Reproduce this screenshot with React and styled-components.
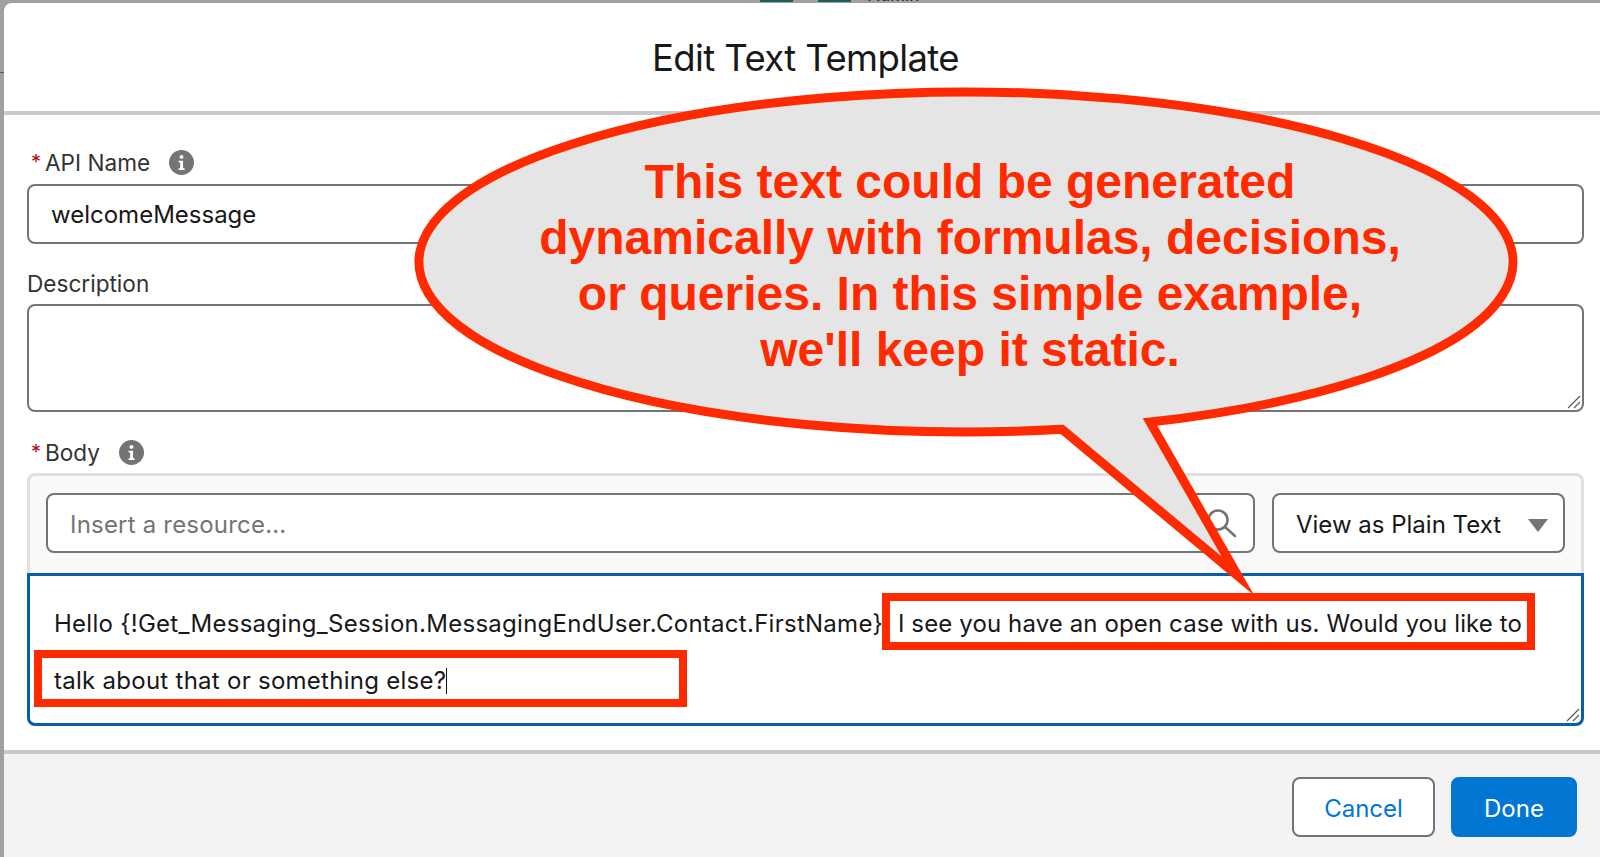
import React from 'react';
import styled, { createGlobalStyle } from 'styled-components';

const Global = createGlobalStyle`
  html, body { margin: 0; padding: 0; height: 100%; background: #a0a0a0; overflow: hidden; }
  * { box-sizing: border-box; }
`;

function InfoIcon() {
  return (
    <InfoSvg viewBox="0 0 24 24">
      <circle cx="12" cy="12" r="12" fill="#747474" />
      <circle cx="12" cy="6.6" r="1.9" fill="#fff" />
      <path d="M9.2 10.4h4.3v7.2h1.5v1.6H9.2v-1.6h1.5v-5.6H9.2z" fill="#fff" />
    </InfoSvg>
  );
}

function Grip() {
  return (
    <GripSvg viewBox="0 0 14 14">
      <path d="M1 13 13 1M7 13l6-6" stroke="#555" strokeWidth="1.1" fill="none" />
    </GripSvg>
  );
}

export default function App() {
  return (
    <Page>
      <Global />
      <BehindBar>
        <TealChip />
        <TealChip />
        <BehindText>Admin</BehindText>
      </BehindBar>
      <BehindLine />
      <Modal>
        <Header>Edit Text Template</Header>
        <Content>
          <Label>
            <Star>*</Star>API Name
            <InfoIcon />
          </Label>
          <Input>welcomeMessage</Input>
          <DescLabel>Description</DescLabel>
          <TextArea>
            <Grip />
          </TextArea>
          <BodyLabel>
            <Star>*</Star>Body
            <InfoIcon />
          </BodyLabel>
          <BodyPanel>
            <Toolbar>
              <ResourceBox>
                Insert a resource...
                <SearchSvg viewBox="0 0 32 32">
                  <circle cx="13" cy="13" r="9.5" />
                  <path d="M20 20l10 9" />
                </SearchSvg>
              </ResourceBox>
              <ViewSelect>
                View as Plain Text
                <Caret />
              </ViewSelect>
            </Toolbar>
            <Editor>
              <EditorLine>
                <span>Hello {'{'}!Get_Messaging_Session.MessagingEndUser.Contact.FirstName{'}'}</span>
                <Marked>I see you have an open case with us. Would you like to</Marked>
              </EditorLine>
              <EditorLine>
                <MarkedSecond>
                  talk about that or something else?<Cursor />
                </MarkedSecond>
              </EditorLine>
              <Grip />
            </Editor>
          </BodyPanel>
        </Content>
        <Footer>
          <CancelButton>Cancel</CancelButton>
          <DoneButton>Done</DoneButton>
        </Footer>
      </Modal>

      <Callout>
        <BubbleSvg viewBox="0 0 1110 510" width="1110" height="510">
          <path
            d="M738 336.09 A547 170 0 1 0 650 343.36 L826 490 Z"
            fill="#e5e5e5"
            stroke="#ff2a00"
            strokeWidth="9"
            strokeLinejoin="miter"
            strokeMiterlimit="20"
          />
        </BubbleSvg>
        <CalloutText>
          This text could be generated
          <br />
          dynamically with formulas, decisions,
          <br />
          or queries. In this simple example,
          <br />
          we'll keep it static.
        </CalloutText>
      </Callout>
    </Page>
  );
}

const Page = styled.div`
  position: relative;
  width: 1600px;
  height: 857px;
  padding: 3px 0 0 4px;
  overflow: hidden;
  font-family: 'Inter', 'Liberation Sans', sans-serif;
  color: #181818;
`;

const BehindBar = styled.div`
  position: absolute;
  left: 760px;
  top: 0;
  height: 2px;
  display: flex;
  gap: 25px;
  overflow: hidden;
`;

const TealChip = styled.span`
  width: 33px;
  height: 2px;
  background: #1f5f5b;
`;

const BehindText = styled.span`
  margin: -18px 0 0 -8px;
  font-size: 17px;
  line-height: 26px;
  color: #222;
`;

const BehindLine = styled.div`
  position: absolute;
  left: 0;
  top: 72px;
  width: 4px;
  height: 1px;
  background: #555;
`;

const Modal = styled.div`
  height: 854px;
  background: #fff;
  border-radius: 8px 0 0 0;
  display: flex;
  flex-direction: column;
  overflow: hidden;
`;

const Header = styled.div`
  height: 112px;
  flex: none;
  border-bottom: 4px solid #c9c9c9;
  padding: 33px 0 0 7px;
  text-align: center;
  font-size: 36.5px;
  line-height: 44px;
  letter-spacing: -0.6px;
  color: #181818;
`;

const Content = styled.div`
  flex: 1;
  padding: 0 16px 0 23px;
`;

const Label = styled.div`
  display: flex;
  align-items: center;
  height: 30px;
  margin-top: 33px;
  padding: 0 0 2px 4px;
  font-size: 22.6px;
  color: #333;
`;

const DescLabel = styled(Label)`
  margin-top: 24px;
  padding: 0;
`;

const BodyLabel = styled(Label)`
  margin-top: 26px;
`;

const Star = styled.span`
  color: #ba0517;
  margin-right: 4px;
  font-size: 20px;
`;

const InfoSvg = styled.svg`
  width: 25px;
  height: 25px;
  margin-left: 19px;
`;

const Input = styled.div`
  height: 60px;
  margin-top: 6px;
  border: 2px solid #747474;
  border-radius: 8px;
  padding: 0 22px;
  display: flex;
  align-items: center;
  font-size: 24px;
  color: #181818;
`;

const TextArea = styled.div`
  position: relative;
  height: 108px;
  margin-top: 6px;
  border: 2px solid #747474;
  border-radius: 8px;
`;

const GripSvg = styled.svg`
  position: absolute;
  right: 1px;
  bottom: 1px;
  width: 14px;
  height: 14px;
`;

const BodyPanel = styled.div`
  margin-top: 5px;
  height: 253px;
  border: 3px solid #e0e0e0;
  border-bottom: 0;
  border-radius: 8px;
  background: #f9f9f9;
  display: flex;
  flex-direction: column;
`;

const Toolbar = styled.div`
  height: 97px;
  padding: 17px 19px 0 19px;
  display: flex;
  gap: 17px;
  margin: 0 -3px;
`;

const ResourceBox = styled.div`
  position: relative;
  flex: 1;
  height: 60px;
  border: 2px solid #747474;
  border-radius: 8px;
  background: #fff;
  padding: 2px 22px 0;
  display: flex;
  align-items: center;
  font-size: 24px;
  letter-spacing: 0.2px;
  color: #747474;
`;

const SearchSvg = styled.svg`
  position: absolute;
  right: 16px;
  top: 12px;
  width: 32px;
  height: 32px;
  fill: none;
  stroke: #747474;
  stroke-width: 2.6;
  stroke-linecap: round;
`;

const ViewSelect = styled.div`
  position: relative;
  width: 293px;
  height: 60px;
  border: 2px solid #747474;
  border-radius: 8px;
  background: #fff;
  padding: 2px 22px 0;
  display: flex;
  align-items: center;
  font-size: 24px;
  color: #181818;
`;

const Caret = styled.span`
  position: absolute;
  right: 15px;
  top: 24px;
  width: 0;
  height: 0;
  border-left: 10px solid transparent;
  border-right: 10px solid transparent;
  border-top: 13px solid #747474;
`;

const Editor = styled.div`
  position: relative;
  flex: 1;
  margin: 0 -3px;
  background: #fff;
  border: 3px solid #0b5cab;
  border-radius: 0 0 8px 8px;
  padding: 19px 0 0 24px;
  font-size: 24px;
  letter-spacing: 0.27px;
  color: #181818;
`;

const EditorLine = styled.div`
  height: 57px;
  white-space: nowrap;
  line-height: 57px;
`;

const Marked = styled.span`
  position: relative;
  margin-left: 15px;
  letter-spacing: 0.12px;
  &::after {
    content: '';
    box-sizing: border-box;
    position: absolute;
    left: -16px;
    right: -13px;
    top: -16px;
    height: 57px;
    border: 8px solid #ff2a00;
  }
`;

const MarkedSecond = styled.span`
  position: relative;
  &::after {
    content: '';
    box-sizing: border-box;
    position: absolute;
    left: -20px;
    width: 653px;
    top: -16px;
    height: 57px;
    border: 8px solid #ff2a00;
  }
`;

const Cursor = styled.i`
  display: inline-block;
  width: 1px;
  height: 26px;
  background: #111;
  vertical-align: -5px;
`;

const Footer = styled.div`
  height: 107px;
  flex: none;
  border-top: 4px solid #c9c9c9;
  background: #f3f3f3;
  display: flex;
  justify-content: flex-end;
  gap: 16px;
  padding: 23px 23px 0 0;
`;

const CancelButton = styled.div`
  width: 143px;
  height: 60px;
  padding-top: 2px;
  border: 2px solid #747474;
  border-radius: 8px;
  background: #fff;
  color: #0176d3;
  display: flex;
  align-items: center;
  justify-content: center;
  font-size: 24px;
`;

const DoneButton = styled(CancelButton)`
  width: 126px;
  border-color: #0176d3;
  background: #0176d3;
  color: #fff;
`;

const Callout = styled.div`
  position: absolute;
  left: 412px;
  top: 86px;
  width: 1110px;
  height: 510px;
`;

const BubbleSvg = styled.svg`
  display: block;
`;

const CalloutText = styled.div`
  position: absolute;
  left: 0;
  width: 1116px;
  top: 68px;
  text-align: center;
  font-family: 'Liberation Sans', Arial, sans-serif;
  font-weight: 700;
  font-size: 48px;
  line-height: 56px;
  color: #ff2a00;
`;
